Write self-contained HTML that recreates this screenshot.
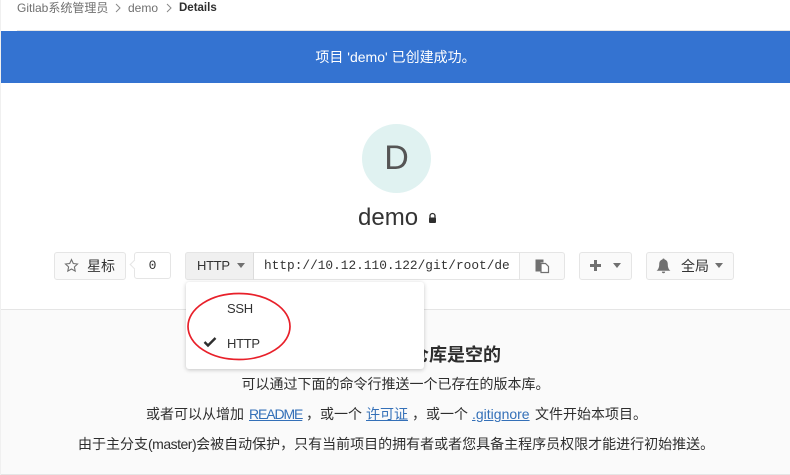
<!DOCTYPE html>
<html><head><meta charset="utf-8"><style>
html,body{margin:0;padding:0}
body{width:790px;height:475px;overflow:hidden;position:relative;background:#fff;font-family:"Liberation Sans","Noto Sans CJK SC",sans-serif;font-size:14px;color:#2e2e2e}
.a{position:absolute;white-space:nowrap}
.l{position:absolute;white-space:nowrap;top:404px;line-height:20px}
.btn{position:absolute;box-sizing:border-box;background:#fafafa;border:1px solid #e5e5e5;border-radius:3px;height:28px}
a{color:#3470b8;text-decoration:underline}
</style></head><body>
<div class="a" style="left:0;top:0;width:1px;height:475px;background:#f0f0f0"></div>
<div class="a" style="left:17px;top:1px;line-height:15px;font-size:12px;color:#707070">Gitlab系统管理员</div>
<svg class="a" style="left:114px;top:3px" width="8" height="10"><path d="M2 1l4 4-4 4" fill="none" stroke="#888" stroke-width="1"/></svg>
<div class="a" style="left:128px;top:1px;line-height:15px;font-size:12px;color:#707070">demo</div>
<svg class="a" style="left:165px;top:3px" width="8" height="10"><path d="M2 1l4 4-4 4" fill="none" stroke="#888" stroke-width="1"/></svg>
<div class="a" style="left:179px;top:1px;line-height:15px;font-size:11.5px;color:#2e2e2e;font-weight:bold">Details</div>
<div class="a" style="left:17px;top:30px;width:773px;height:1px;background:#e5e5e5"></div>
<div class="a" style="left:1px;top:31px;width:789px;height:52px;background:#3473d1"></div>
<div class="a" style="left:1px;width:789px;top:31px;line-height:52px;text-align:center;color:#fff;font-size:14px">项目 'demo' 已创建成功。</div>

<div class="a" style="left:362px;top:124px;width:69px;height:69px;border-radius:50%;background:#e0f2f1;text-align:center;line-height:69px;font-size:34px;color:#555">D</div>
<div class="a" style="left:358px;top:203px;line-height:30px;font-size:24px;color:#333">demo</div>
<svg class="a" style="left:427px;top:212px" width="11" height="12" viewBox="0 0 11 12"><path d="M3 6V4a2.5 2.5 0 0 1 5 0v2" fill="none" stroke="#2e2e2e" stroke-width="1.3"/><rect x="2" y="5.5" width="7" height="5.5" rx="1" fill="#2e2e2e"/></svg>

<div class="btn" style="left:54px;top:252px;width:72px"></div>
<svg class="a" style="left:64px;top:258px" width="15" height="15" viewBox="0 0 15 15"><path d="M7.5 1.600l1.800 3.900 4.200.5-3.100 2.900.8 4.200-3.700-2.100-3.700 2.100.8-4.200L1.500 6l4.200-.5z" fill="none" stroke="#707070" stroke-width="1.100"/></svg>
<div class="a" style="left:87px;top:252px;line-height:28px;font-size:14px;color:#333">星标</div>
<div class="a" style="left:134px;top:252px;width:37px;height:27px;box-sizing:border-box;border:1px solid #e5e5e5;border-radius:3px;background:#fff;text-align:center;line-height:26px;font-family:'Liberation Mono',monospace;font-size:13px;color:#333">0</div>
<div class="a" style="left:131px;top:261px;width:6px;height:6px;background:#fff;border-left:1px solid #e5e5e5;border-bottom:1px solid #e5e5e5;transform:rotate(45deg)"></div>

<div class="btn" style="left:185px;top:252px;width:380px"></div>
<div class="a" style="left:185px;top:252px;width:69px;height:28px;box-sizing:border-box;background:#f0f0f0;border:1px solid #e5e5e5;border-radius:3px 0 0 3px;border-right:1px solid #dcdcdc"></div>
<div class="a" style="left:197px;top:252px;line-height:28px;font-size:13px;letter-spacing:-.3px;color:#333">HTTP</div>
<svg class="a" style="left:236px;top:263px" width="10" height="6"><path d="M1 0h8L5 5z" fill="#707070"/></svg>
<div class="a" style="left:254px;top:253px;width:265px;height:26px;background:#fff;border-right:1px solid #e5e5e5;overflow:hidden;line-height:26px;font-family:'Liberation Mono',monospace;font-size:12.8px;color:#333;text-indent:10px">http://10.12.110.122/git/root/de</div>
<svg class="a" style="left:534px;top:258px" width="16" height="16" viewBox="0 0 16 16"><path d="M1.500 1.500h8v3h-3v9h-5z" fill="#707070"/><path d="M7 5.500h4.500l3 3v6H7z" fill="#fff" stroke="#707070" stroke-width="1.200"/></svg>

<div class="btn" style="left:579px;top:252px;width:53px"></div>
<svg class="a" style="left:589px;top:259px" width="13" height="13"><path d="M5 1h3v4h4v3H8v4H5V8H1V5h4z" fill="#707070"/></svg>
<svg class="a" style="left:612px;top:263px" width="10" height="6"><path d="M1 0h8L5 5z" fill="#707070"/></svg>

<div class="btn" style="left:646px;top:252px;width:88px"></div>
<svg class="a" style="left:656px;top:258px" width="15" height="16" viewBox="0 0 14 15"><path d="M7 .5c.6 0 1 .4 1 .9C10 1.900 11 3.500 11 5.800c0 3 .8 5 2.500 6.200H.5C2.200 10.800 3 8.800 3 5.800 3 3.500 4 1.900 6 1.400 6 .9 6.400.5 7 .5z" fill="#707070"/><path d="M5.500 12.800a1.500 1.500 0 0 0 3 0z" fill="#707070"/></svg>
<div class="a" style="left:681px;top:252px;line-height:28px;font-size:14px;color:#333">全局</div>
<svg class="a" style="left:714px;top:263px" width="10" height="6"><path d="M1 0h8L5 5z" fill="#707070"/></svg>

<div class="a" style="left:1px;top:309px;width:789px;height:166px;background:#fafafa;border-top:1px solid #e5e5e5;border-bottom:1px solid #e5e5e5;box-sizing:border-box"></div>
<div class="a" style="right:289px;top:343px;line-height:24px;font-size:18px;font-weight:bold;color:#2e2e2e">这个项目版本仓库是空的</div>
<div class="a" style="left:1px;width:789px;top:374px;line-height:20px;text-align:center">可以通过下面的命令行推送一个已存在的版本库。</div>

<span class="l" style="left:146px">或者可以从增加</span>
<span class="l" style="left:249px"><a style="letter-spacing:-1.100px">README</a></span>
<span class="l" style="left:306px">，</span>
<span class="l" style="left:320px">或一个</span>
<span class="l" style="left:366px"><a>许可证</a></span>
<span class="l" style="left:412px">，</span>
<span class="l" style="left:426px">或一个</span>
<span class="l" style="left:472px"><a>.gitignore</a></span>
<span class="l" style="left:535px">文件开始本项目。</span>

<div class="a" style="left:78px;top:434px;line-height:20px">由于主分支<span style="letter-spacing:-.5px">(master)</span>会被自动保护，只有当前项目的拥有者或者您具备主程序员权限才能进行初始推送。</div>

<div class="a" style="left:186px;top:282px;width:238px;height:87px;background:#fff;border-radius:3px;box-shadow:0 1px 4px rgba(0,0,0,.22)"></div>
<div class="a" style="left:227px;top:299px;line-height:20px;font-size:13px;letter-spacing:-.3px;color:#333">SSH</div>
<div class="a" style="left:227px;top:334px;line-height:20px;font-size:13px;letter-spacing:-.3px;color:#333">HTTP</div>
<svg class="a" style="left:203px;top:336px" width="14" height="12" viewBox="0 0 14 12"><path d="M1.500 6l3.500 3.500L12.500 2" fill="none" stroke="#2e2e2e" stroke-width="2.400"/></svg>
<svg class="a" style="left:184px;top:290px" width="110" height="74"><ellipse cx="55" cy="36.500" rx="51" ry="33" fill="none" stroke="#e8202a" stroke-width="1.700"/></svg>
</body></html>
